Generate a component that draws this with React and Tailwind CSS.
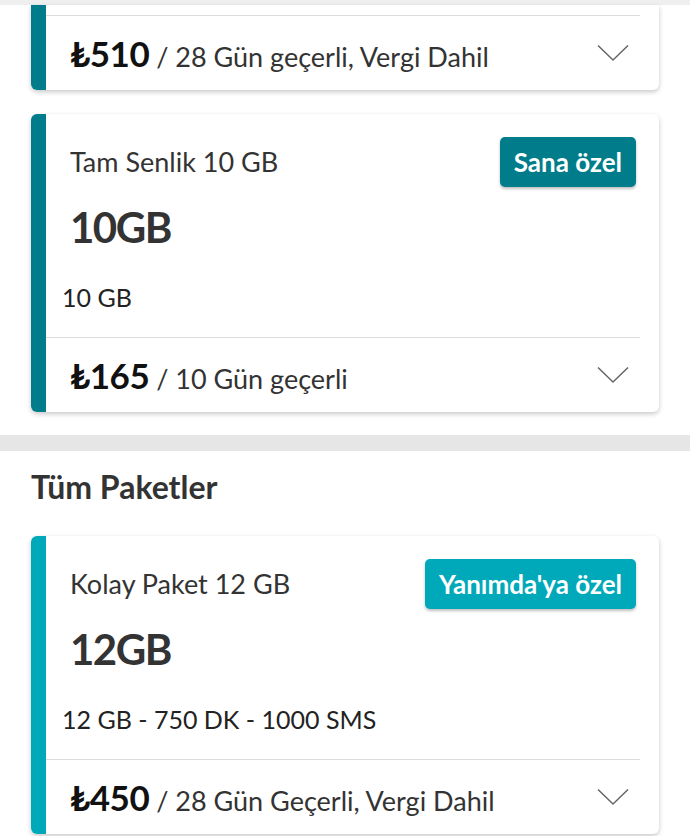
import React from "react";

const Chevron = () => (
  <svg width="32" height="18" viewBox="0 0 32 18" fill="none" className="shrink-0">
    <path d="M1 1.5 L16 16 L31 1.5" stroke="#666" strokeWidth="1.5" />
  </svg>
);

const PriceRow = ({ price, note }) => (
  <div className="flex h-[74px] items-center justify-between pl-[24px] pr-[30px]">
    <div className="flex items-baseline text-[#333]">
      <span className="text-[35px] font-bold text-[#111] tracking-[-0.5px]">₺{price}</span>
      <span className="ml-[7px] text-[27px]">/ {note}</span>
    </div>
    <Chevron />
  </div>
);

const PackageCard = ({ bar, badgeBg, badge, title, amount, detail, price, note }) => (
  <div className="flex rounded-[6px] bg-white shadow-[0_2px_5px_rgba(0,0,0,0.22)] overflow-hidden">
    <div className={`w-[15px] shrink-0 ${bar}`} />
    <div className="flex-1 pt-[23px]">
      {/* header */}
      <div className="flex h-[50px] items-center justify-between pl-[24px] pr-[23px]">
        <span className="text-[27px] text-[#333]">{title}</span>
        <span
          className={`flex h-[50px] items-center rounded-[5px] px-[14px] text-[26px] font-bold text-white shadow-[0_2px_3px_rgba(0,0,0,0.25)] ${badgeBg}`}
        >
          {badge}
        </span>
      </div>
      <div className="mt-[15px] pl-[24px] text-[42px] font-bold leading-[50px] tracking-[-1.5px] text-[#333]">{amount}</div>
      <div className="mt-[30px] pl-[16px] text-[25px] leading-[30px] text-[#222]">{detail}</div>
      <div className="mt-[25px] mr-[19px] h-px bg-[#dcdcdc]" />
      <PriceRow price={price} note={note} />
    </div>
  </div>
);

export default function App() {
  return (
    <div className="w-[690px] h-[836px] overflow-hidden bg-white font-['Lato',sans-serif]">
      <div className="h-[5px] bg-[#efefef]" />
      <div className="px-[31px]">
        {/* cut-off card on top */}
        <div className="flex rounded-b-[6px] bg-white shadow-[0_2px_5px_rgba(0,0,0,0.22)] overflow-hidden">
          <div className="w-[15px] shrink-0 bg-[#007c8a]" />
          <div className="flex-1 pt-[10px]">
            <div className="mr-[19px] h-px bg-[#dcdcdc]" />
            <PriceRow price="510" note="28 Gün geçerli, Vergi Dahil" />
          </div>
        </div>
        <div className="mt-[24px]">
          <PackageCard
            bar="bg-[#007c8a]"
            badgeBg="bg-[#007c8a]"
            badge="Sana özel"
            title="Tam Senlik 10 GB"
            amount="10GB"
            detail="10 GB"
            price="165"
            note="10 Gün geçerli"
          />
        </div>
      </div>
      <div className="mt-[23px] h-[16px] bg-[#e6e6e6]" />
      <div className="px-[31px]">
        <h2 className="mt-[18px] text-[32px] font-bold leading-[36px] text-[#333]">Tüm Paketler</h2>
        <div className="mt-[31px]">
          <PackageCard
            bar="bg-[#00a9b9]"
            badgeBg="bg-[#00a9b9]"
            badge="Yanımda'ya özel"
            title="Kolay Paket 12 GB"
            amount="12GB"
            detail="12 GB - 750 DK - 1000 SMS"
            price="450"
            note="28 Gün Geçerli, Vergi Dahil"
          />
        </div>
      </div>
    </div>
  );
}
